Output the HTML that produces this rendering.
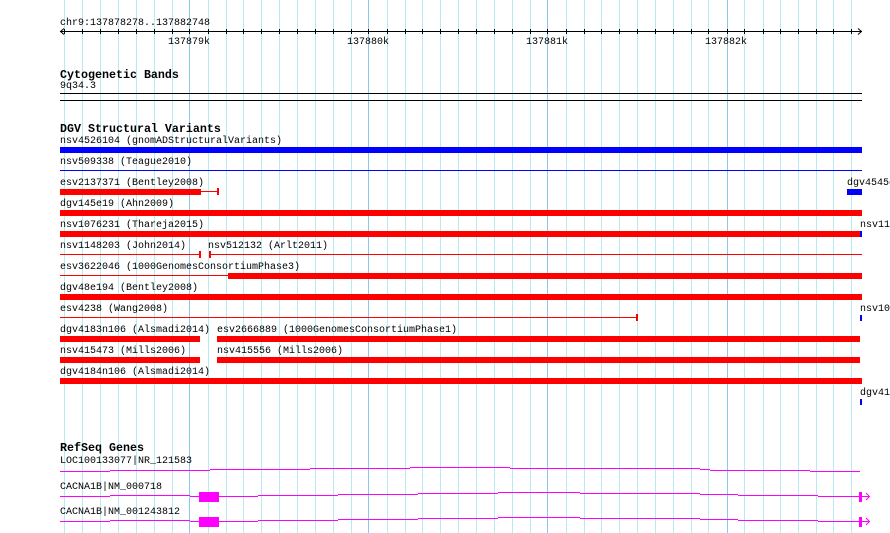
<!DOCTYPE html>
<html><head><meta charset="utf-8"><style>
html,body{margin:0;padding:0;background:#fff;}
svg{display:block}
text{font-family:"Liberation Mono",monospace;font-size:10px;fill:#000}
.h{font-weight:bold;font-size:11.67px}
</style></head><body>
<svg width="890" height="533" viewBox="0 0 890 533" xmlns="http://www.w3.org/2000/svg" shape-rendering="crispEdges">
<path stroke="#b4ecf0" stroke-width="1" fill="none" d="M64.5 0V533M82.5 0V533M100.5 0V533M118.5 0V533M136.5 0V533M154.5 0V533M172.5 0V533M208.5 0V533M226.5 0V533M243.5 0V533M261.5 0V533M279.5 0V533M297.5 0V533M315.5 0V533M333.5 0V533M351.5 0V533M387.5 0V533M405.5 0V533M422.5 0V533M440.5 0V533M458.5 0V533M476.5 0V533M494.5 0V533M512.5 0V533M530.5 0V533M566.5 0V533M584.5 0V533M601.5 0V533M619.5 0V533M637.5 0V533M655.5 0V533M673.5 0V533M691.5 0V533M708.5 0V533M744.5 0V533M763.5 0V533M780.5 0V533M798.5 0V533M816.5 0V533M833.5 0V533M851.5 0V533"/>
<path stroke="#8cc8ec" stroke-width="1" fill="none" d="M189.5 0V533M368.5 0V533M547.5 0V533M727.5 0V533"/>
<path stroke="#000" stroke-width="1" fill="none" d="M64.5 29V34M82.5 29V34M100.5 29V34M118.5 29V34M136.5 29V34M154.5 29V34M172.5 29V34M189.5 29V34M208.5 29V34M226.5 29V34M243.5 29V34M261.5 29V34M279.5 29V34M297.5 29V34M315.5 29V34M333.5 29V34M351.5 29V34M368.5 29V34M387.5 29V34M405.5 29V34M422.5 29V34M440.5 29V34M458.5 29V34M476.5 29V34M494.5 29V34M512.5 29V34M530.5 29V34M547.5 29V34M566.5 29V34M584.5 29V34M601.5 29V34M619.5 29V34M637.5 29V34M655.5 29V34M673.5 29V34M691.5 29V34M708.5 29V34M727.5 29V34M744.5 29V34M763.5 29V34M780.5 29V34M798.5 29V34M816.5 29V34M833.5 29V34M851.5 29V34"/>
<!-- ruler -->
<text x="60" y="25">chr9:137878278..137882748</text>
<line x1="60" y1="31.5" x2="862" y2="31.5" stroke="#000"/>
<polyline points="64,28.5 60.5,31.5 64,34.5" fill="none" stroke="#000" shape-rendering="auto"/>
<polyline points="858,28.5 861.5,31.5 858,34.5" fill="none" stroke="#000" shape-rendering="auto"/>
<text x="189" y="44" text-anchor="middle">137879k</text>
<text x="368" y="44" text-anchor="middle">137880k</text>
<text x="547" y="44" text-anchor="middle">137881k</text>
<text x="726" y="44" text-anchor="middle">137882k</text>
<!-- cytobands -->
<text class="h" x="60" y="78">Cytogenetic Bands</text>
<text x="60" y="88">9q34.3</text>
<rect x="60" y="93" width="802" height="1" fill="#000"/>
<rect x="60" y="100" width="802" height="1" fill="#000"/>
<!-- DGV -->
<text class="h" x="60" y="132">DGV Structural Variants</text>
<text x="60" y="143">nsv4526104 (gnomADStructuralVariants)</text>
<rect x="60" y="147" width="802" height="6" fill="#0000ff"/>
<text x="60" y="164">nsv509338 (Teague2010)</text>
<rect x="60" y="170" width="802" height="1" fill="#0000ff"/>
<text x="60" y="185">esv2137371 (Bentley2008)</text>
<rect x="60" y="189" width="141" height="6" fill="#f00"/>
<rect x="201" y="191" width="17" height="1" fill="#f00"/>
<rect x="217" y="188" width="2" height="7" fill="#f00"/>
<text x="847" y="185">dgv4545e</text>
<rect x="847" y="189" width="15" height="6" fill="#0000ff"/>
<text x="60" y="206">dgv145e19 (Ahn2009)</text>
<rect x="60" y="210" width="802" height="6" fill="#f00"/>
<text x="60" y="227">nsv1076231 (Thareja2015)</text>
<rect x="60" y="231" width="800" height="6" fill="#f00"/>
<text x="860" y="227">nsv11</text>
<rect x="860" y="231" width="2" height="6" fill="#0000ff"/>
<text x="60" y="248">nsv1148203 (John2014)</text>
<rect x="60" y="254" width="140" height="1" fill="#f00"/>
<rect x="199" y="251" width="2" height="7" fill="#f00"/>
<text x="208" y="248">nsv512132 (Arlt2011)</text>
<rect x="209" y="251" width="2" height="7" fill="#f00"/>
<rect x="210" y="254" width="652" height="1" fill="#f00"/>
<text x="60" y="269">esv3622046 (1000GenomesConsortiumPhase3)</text>
<rect x="60" y="275" width="168" height="1" fill="#f00"/>
<rect x="228" y="273" width="634" height="6" fill="#f00"/>
<text x="60" y="290">dgv48e194 (Bentley2008)</text>
<rect x="60" y="294" width="802" height="6" fill="#f00"/>
<text x="60" y="311">esv4238 (Wang2008)</text>
<rect x="60" y="317" width="577" height="1" fill="#f00"/>
<rect x="636" y="314" width="2" height="7" fill="#f00"/>
<text x="860" y="311">nsv10</text>
<rect x="860" y="315" width="2" height="6" fill="#0000ff"/>
<text x="60" y="332">dgv4183n106 (Alsmadi2014)</text>
<rect x="60" y="336" width="140" height="6" fill="#f00"/>
<text x="217" y="332">esv2666889 (1000GenomesConsortiumPhase1)</text>
<rect x="217" y="336" width="643" height="6" fill="#f00"/>
<text x="60" y="353">nsv415473 (Mills2006)</text>
<rect x="60" y="357" width="140" height="6" fill="#f00"/>
<text x="217" y="353">nsv415556 (Mills2006)</text>
<rect x="217" y="357" width="643" height="6" fill="#f00"/>
<text x="60" y="374">dgv4184n106 (Alsmadi2014)</text>
<rect x="60" y="378" width="802" height="6" fill="#f00"/>
<text x="860" y="395">dgv41</text>
<rect x="860" y="399" width="2" height="6" fill="#0000ff"/>
<!-- RefSeq -->
<text class="h" x="60" y="451">RefSeq Genes</text>
<text x="60" y="463">LOC100133077|NR_121583</text>
<g fill="#ff00ff">
<rect x="60" y="471" width="50" height="1"/><rect x="110" y="470" width="100" height="1"/><rect x="210" y="469" width="100" height="1"/><rect x="310" y="468" width="100" height="1"/><rect x="410" y="467" width="100" height="1"/><rect x="510" y="468" width="190" height="1"/><rect x="700" y="469" width="10" height="1"/><rect x="710" y="470" width="100" height="1"/><rect x="810" y="471" width="50" height="1"/>
</g>
<text x="60" y="489">CACNA1B|NM_000718</text>
<text x="60" y="514">CACNA1B|NM_001243812</text>
<g id="g2" fill="#ff00ff">
<rect x="60" y="496" width="50" height="1"/><rect x="110" y="495" width="80" height="1"/><rect x="190" y="496" width="10" height="1"/>
<rect x="199" y="492" width="20" height="10"/>
<rect x="219" y="496" width="39" height="1"/><rect x="258" y="495" width="80" height="1"/><rect x="338" y="494" width="80" height="1"/><rect x="418" y="493" width="80" height="1"/><rect x="498" y="492" width="82" height="1"/><rect x="580" y="493" width="120" height="1"/><rect x="700" y="494" width="38" height="1"/><rect x="738" y="495" width="80" height="1"/><rect x="818" y="496" width="42" height="1"/>
<rect x="859" y="492" width="3" height="10"/>
<polyline points="866,493 869.5,496.5 866,500" fill="none" stroke="#ff00ff" shape-rendering="auto"/>
<rect x="862" y="496" width="7" height="1"/>
</g>
<use href="#g2" y="25"/>
</svg>
</body></html>
